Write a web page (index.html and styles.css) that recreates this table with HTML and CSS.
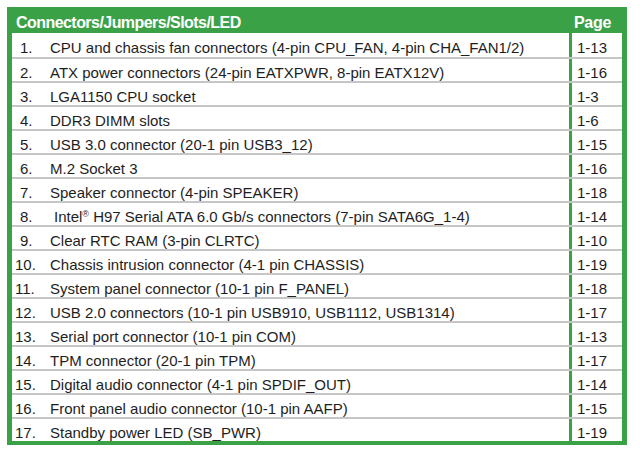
FILE: index.html
```html
<!DOCTYPE html>
<html>
<head>
<meta charset="utf-8">
<link rel="stylesheet" href="styles.css">
</head>
<body>
<div class="table">
  <div class="head">
    <div class="h-title">Connectors/Jumpers/Slots/LED</div>
    <div class="h-page">Page</div>
  </div>
  <div class="row"><div class="item"><span class="num">1.</span><span class="txt">CPU and chassis fan connectors (4-pin CPU_FAN, 4-pin CHA_FAN1/2)</span></div><div class="page">1-13</div></div>
  <div class="row"><div class="item"><span class="num">2.</span><span class="txt">ATX power connectors (24-pin EATXPWR, 8-pin EATX12V)</span></div><div class="page">1-16</div></div>
  <div class="row"><div class="item"><span class="num">3.</span><span class="txt">LGA1150 CPU socket</span></div><div class="page">1-3</div></div>
  <div class="row"><div class="item"><span class="num">4.</span><span class="txt">DDR3 DIMM slots</span></div><div class="page">1-6</div></div>
  <div class="row"><div class="item"><span class="num">5.</span><span class="txt">USB 3.0 connector (20-1 pin USB3_12)</span></div><div class="page">1-15</div></div>
  <div class="row"><div class="item"><span class="num">6.</span><span class="txt">M.2 Socket 3</span></div><div class="page">1-16</div></div>
  <div class="row"><div class="item"><span class="num">7.</span><span class="txt">Speaker connector (4-pin SPEAKER)</span></div><div class="page">1-18</div></div>
  <div class="row"><div class="item"><span class="num">8.</span><span class="txt indent">Intel<sup>®</sup> H97 Serial ATA 6.0 Gb/s connectors (7-pin SATA6G_1-4)</span></div><div class="page">1-14</div></div>
  <div class="row"><div class="item"><span class="num">9.</span><span class="txt">Clear RTC RAM (3-pin CLRTC)</span></div><div class="page">1-10</div></div>
  <div class="row"><div class="item"><span class="num wide">10.</span><span class="txt">Chassis intrusion connector (4-1 pin CHASSIS)</span></div><div class="page">1-19</div></div>
  <div class="row"><div class="item"><span class="num wide">11.</span><span class="txt">System panel connector (10-1 pin F_PANEL)</span></div><div class="page">1-18</div></div>
  <div class="row"><div class="item"><span class="num wide">12.</span><span class="txt">USB 2.0 connectors (10-1 pin USB910, USB1112, USB1314)</span></div><div class="page">1-17</div></div>
  <div class="row"><div class="item"><span class="num wide">13.</span><span class="txt">Serial port connector (10-1 pin COM)</span></div><div class="page">1-13</div></div>
  <div class="row"><div class="item"><span class="num wide">14.</span><span class="txt">TPM connector (20-1 pin TPM)</span></div><div class="page">1-17</div></div>
  <div class="row"><div class="item"><span class="num wide">15.</span><span class="txt">Digital audio connector (4-1 pin SPDIF_OUT)</span></div><div class="page">1-14</div></div>
  <div class="row"><div class="item"><span class="num wide">16.</span><span class="txt">Front panel audio connector (10-1 pin AAFP)</span></div><div class="page">1-15</div></div>
  <div class="row"><div class="item"><span class="num wide">17.</span><span class="txt">Standby power LED (SB_PWR)</span></div><div class="page">1-19</div></div>
</div>
</body>
</html>
```
FILE: styles.css
```css
html, body {
  margin: 0;
  padding: 0;
  background: #ffffff;
}
body {
  padding: 7px 13px 10px 7px;
  font-family: "Liberation Sans", Arial, sans-serif;
  color: #1e1e1e;
}
.table {
  width: 620px;
  box-sizing: border-box;
  background: #3ba146;
  border-left: 5px solid #3ba146;
  border-right: 5px solid #3ba146;
  border-bottom: 4px solid #3ba146;
  display: flex;
  flex-direction: column;
}
.head {
  height: 26px;
  box-sizing: border-box;
  padding-top: 5px;
  display: grid;
  grid-template-columns: 557px 53px;
  align-items: center;
  color: #ffffff;
  font-weight: bold;
  font-size: 16px;
  letter-spacing: -0.55px;
}
.h-title { padding-left: 4px; }
.h-page { padding-left: 5px; letter-spacing: -0.3px; }
.row {
  height: 24px;
  display: grid;
  grid-template-columns: 557px 3px 50px;
  box-sizing: border-box;
  border-top: 2px solid #c6c6c6;
}
.head + .row { border-top: 0; }
.item {
  grid-column: 1;
  background: #ffffff;
  display: flex;
  align-items: center;
  padding-top: 4px;
  font-size: 15px;
}
.page {
  grid-column: 3;
  background: #ffffff;
  display: flex;
  align-items: center;
  padding-top: 4px;
  padding-left: 5px;
  font-size: 15px;
}
.num {
  width: 30px;
  padding-left: 8px;
  flex: none;
}
.num.wide {
  width: 35px;
  padding-left: 3px;
}
.txt { white-space: nowrap; }
.indent { padding-left: 4px; }
sup {
  font-size: 9px;
  vertical-align: 5px;
  line-height: 0;
}
```
